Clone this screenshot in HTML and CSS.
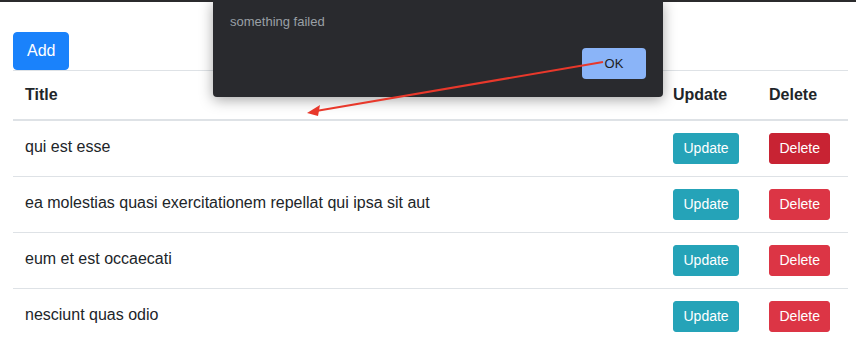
FILE: index.html
```html
<!DOCTYPE html>
<html>
	<head>
		<meta charset="UTF-8">
		<title>Posts</title>
		<link rel="stylesheet" href="styles.css">
	</head>
	<body>
		<!--top frame-->
		<div class="topbar"></div>
		<!--posts table-->
		<main class="page">
			<button class="btn btn-add">Add</button>
			<table class="posts">
				<thead>
					<tr>
						<th class="col-title">Title</th>
						<th class="col-update">Update</th>
						<th class="col-delete">Delete</th>
					</tr>
				</thead>
				<tbody>
					<tr>
						<td>qui est esse</td>
						<td><button class="btn btn-sm btn-info">Update</button></td>
						<td><button class="btn btn-sm btn-danger hover">Delete</button></td>
					</tr>
					<tr>
						<td>ea molestias quasi exercitationem repellat qui ipsa sit aut</td>
						<td><button class="btn btn-sm btn-info">Update</button></td>
						<td><button class="btn btn-sm btn-danger">Delete</button></td>
					</tr>
					<tr>
						<td>eum et est occaecati</td>
						<td><button class="btn btn-sm btn-info">Update</button></td>
						<td><button class="btn btn-sm btn-danger">Delete</button></td>
					</tr>
					<tr>
						<td>nesciunt quas odio</td>
						<td><button class="btn btn-sm btn-info">Update</button></td>
						<td><button class="btn btn-sm btn-danger">Delete</button></td>
					</tr>
				</tbody>
			</table>
		</main>
		<!--alert dialog-->
		<div class="dialog">
			<div class="dialog-msg">something failed</div>
			<div class="dialog-actions">
				<button class="dialog-ok">OK</button>
			</div>
		</div>
		<!--annotation arrow-->
		<svg class="arrow" width="856" height="349" viewBox="0 0 856 349">
			<line x1="603" y1="62" x2="316" y2="111" stroke="#e8382b" stroke-width="2"/>
			<polygon points="307,113 320,105 318,116" fill="#e8382b"/>
		</svg>
	</body>
</html>
```

FILE: styles.css
```css
* {
	margin: 0;
	padding: 0;
	box-sizing: border-box;
}
body {
	font-family: "Liberation Sans", Arial, sans-serif;
	font-size: 16px;
	line-height: 1.5;
	color: #212529;
	background: #fff;
	position: relative;
	width: 856px;
	height: 349px;
	overflow: hidden;
}
.topbar {
	height: 2px;
	background: #2b2b2d;
}
.page {
	padding: 30px 8px 0 13px;
}
.btn {
	font-family: inherit;
	border: 1px solid transparent;
	color: #fff;
	cursor: pointer;
}
.btn-add {
	display: block;
	font-size: 16px;
	line-height: 24px;
	padding: 6px 13px;
	border-radius: 4px;
	background: #1a82fb;
	border-color: #1a82fb;
}
.btn-sm {
	font-size: 14px;
	line-height: 21px;
	padding: 4px 9.5px;
	border-radius: 3px;
}
.btn-info {
	background: #25a3b8;
	border-color: #25a3b8;
}
.btn-danger {
	background: #dc3545;
	border-color: #dc3545;
}
.btn-danger.hover {
	background: #c82333;
	border-color: #c82333;
}
.posts {
	width: 835px;
	border-collapse: collapse;
}
.posts th,
.posts td {
	padding: 12px;
	text-align: left;
	border-top: 1px solid #dee2e6;
	line-height: 24px;
}
.posts th {
	vertical-align: bottom;
	font-weight: bold;
	border-bottom: 2px solid #dee2e6;
}
.posts td {
	vertical-align: top;
	line-height: 28px;
}
.posts td .btn {
	vertical-align: top;
}
.col-update {
	width: 96px;
}
.col-delete {
	width: 91px;
}
/*alert*/
.dialog {
	position: absolute;
	left: 213px;
	top: 0;
	width: 450px;
	height: 97px;
	background: #292a2e;
	border-radius: 0 0 4px 4px;
	box-shadow: 0 3px 14px rgba(0, 0, 0, 0.35);
	padding: 0 17px;
	overflow: hidden;
}
.dialog-msg {
	font-size: 13px;
	line-height: 18px;
	color: #9aa0a6;
	margin-top: 13px;
}
.dialog-actions {
	display: flex;
	justify-content: flex-end;
	margin-top: 17px;
}
.dialog-ok {
	width: 64px;
	height: 31px;
	border: none;
	border-radius: 4px;
	background: #8ab4f8;
	color: #202124;
	font-family: inherit;
	font-size: 13px;
}
.arrow {
	position: absolute;
	left: 0;
	top: 0;
	pointer-events: none;
}
```
